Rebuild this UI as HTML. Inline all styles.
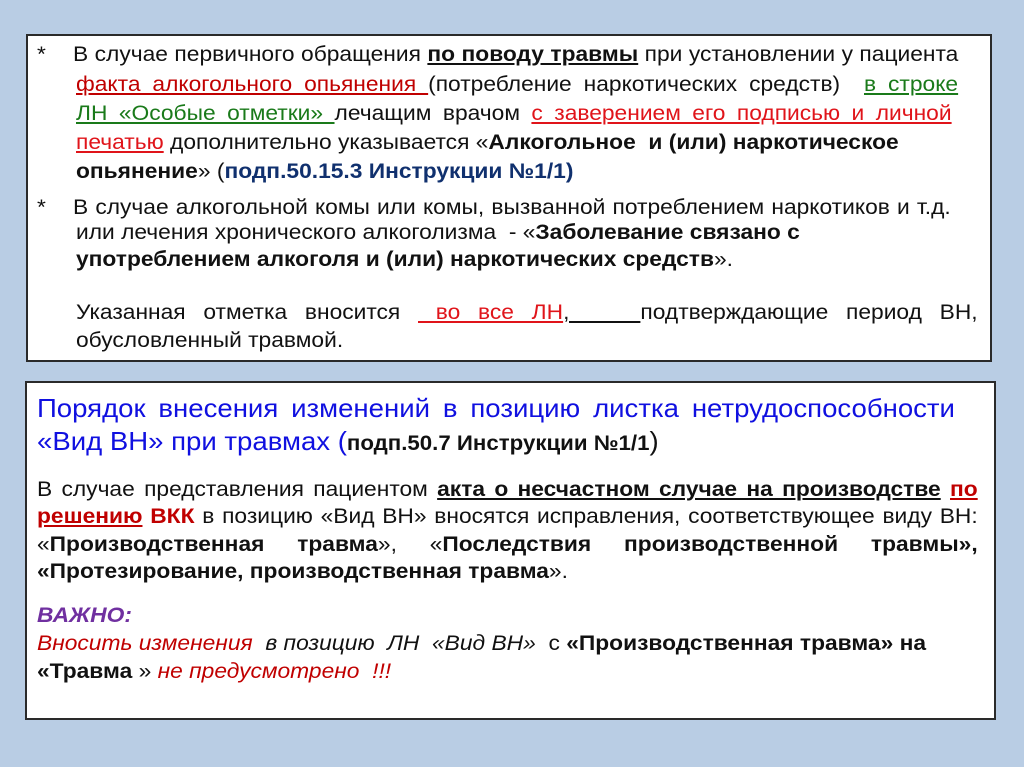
<!DOCTYPE html>
<html><head><meta charset="utf-8"><style>
body{margin:0;width:1024px;height:767px;background:#b9cde4;position:relative;overflow:hidden;font-family:"Liberation Sans",Arial,sans-serif;color:#111}
.box{position:absolute;background:#fff;border:2px solid #2a2a2a;box-sizing:border-box}
.l{position:absolute;white-space:nowrap;font-size:21px;line-height:26px;height:26px;transform:scaleX(1.085);transform-origin:0 0}
.j{text-align:justify;text-align-last:justify}
.r{color:#e0141a}.dr{color:#c00000}.g{color:#1a7a1a}.nb{color:#10306e;font-weight:bold}
u{text-decoration-thickness:1.5px;text-underline-offset:2px}
b{font-weight:bold}
.t{font-size:26px;line-height:32px;height:32px;color:#1010e0;transform:scaleX(1.06)}
.i{font-style:italic}
</style></head><body>
<div class="box" style="left:26px;top:34px;width:966px;height:328px"></div>
<div class="box" style="left:25px;top:381px;width:971px;height:339px"></div>

<div class="l" style="left:37px;top:42px">*</div>
<div class="l j" style="left:73px;top:42px;width:816px">В случае первичного обращения <b><u>по поводу травмы</u></b> при установлении у пациента</div>
<div class="l j" style="left:76px;top:72px;width:813px"><u class="dr">факта алкогольного опьянения </u>(потребление наркотических средств) &nbsp;<u class="g">в строке</u></div>
<div class="l j" style="left:76px;top:101px;width:807px"><u class="g">ЛН «Особые отметки» </u>лечащим врачом <u class="r">с заверением его подписью и личной</u></div>
<div class="l" style="left:76px;top:130px"><u class="r">печатью</u> дополнительно указывается «<b>Алкогольное &nbsp;и (или) наркотическое</b></div>
<div class="l" style="left:76px;top:159px"><b>опьянение</b>» (<span class="nb">подп.50.15.3 Инструкции №1/1)</span></div>
<div class="l" style="left:37px;top:195px">*</div>
<div class="l j" style="left:73px;top:195px;width:809px">В случае алкогольной комы или комы, вызванной потреблением наркотиков и т.д.</div>
<div class="l" style="left:76px;top:220px">или лечения хронического алкоголизма &nbsp;- «<b>Заболевание связано с</b></div>
<div class="l" style="left:76px;top:247px"><b>употреблением алкоголя и (или) наркотических средств</b>».</div>
<div class="l j" style="left:76px;top:300px;width:831px">Указанная отметка вносится <u class="r">&nbsp;во все ЛН</u><u>,&nbsp;&nbsp;&nbsp;&nbsp;</u>подтверждающие период ВН,</div>
<div class="l" style="left:76px;top:328px">обусловленный травмой.</div>

<div class="l t j" style="left:37px;top:392px;width:866px">Порядок внесения изменений в позицию листка нетрудоспособности</div>
<div class="l t" style="left:37px;top:425px">«Вид ВН» при травмах (<b style="font-size:21px;color:#111">подп.50.7 Инструкции №1/1</b><span style="color:#111">)</span></div>
<div class="l j" style="left:37px;top:477px;width:867px">В случае представления пациентом <b><u>акта о несчастном случае на производстве</u></b> <b class="dr"><u>по</u></b></div>
<div class="l j" style="left:37px;top:504px;width:867px"><b class="dr"><u>решению</u></b> <b class="dr">ВКК</b> в позицию «Вид ВН» вносятся исправления, соответствующее виду ВН:</div>
<div class="l j" style="left:37px;top:532px;width:867px">«<b>Производственная травма</b>», «<b>Последствия производственной травмы»,</b></div>
<div class="l" style="left:37px;top:559px"><b>«Протезирование, производственная травма</b>».</div>
<div class="l i" style="left:37px;top:603px;color:#7030a0;font-weight:bold">ВАЖНО:</div>
<div class="l" style="left:37px;top:631px"><i class="dr">Вносить изменения</i> <i>&nbsp;в позицию &nbsp;ЛН &nbsp;«Вид ВН» &nbsp;</i>с <b>«Производственная травма» на</b></div>
<div class="l" style="left:37px;top:659px"><b>«Травма</b> » <i class="dr">не предусмотрено &nbsp;!!!</i></div>
</body></html>
